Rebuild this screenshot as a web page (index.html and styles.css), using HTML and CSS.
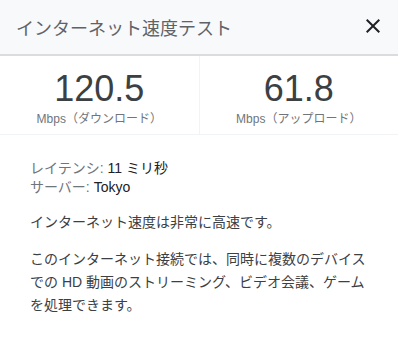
FILE: index.html
```html
<!DOCTYPE html>
<html lang="ja">
  <head>
    <meta charset="UTF-8" />
    <meta name="viewport" content="width=device-width, initial-scale=1.0" />
    <title>インターネット速度テスト</title>
    <link rel="stylesheet" href="styles.css">
  </head>
  <body class="body">
    <div class="panel">
      <div class="header">
        <p class="title">インターネット速度テスト</p>
        <button class="close" aria-label="閉じる">
          <svg width="24" height="24" viewBox="0 0 24 24">
            <path fill="#202124" d="M19 6.41L17.59 5 12 10.59 6.41 5 5 6.41 10.59 12 5 17.59 6.41 19 12 13.41 17.59 19 19 17.59 13.41 12z"/>
          </svg>
        </button>
      </div>
      <div class="stats">
        <div class="stat">
          <div class="value">120.5</div>
          <div class="unit">Mbps（ダウンロード）</div>
        </div>
        <div class="stat">
          <div class="value">61.8</div>
          <div class="unit">Mbps（アップロード）</div>
        </div>
      </div>
      <div class="details">
        <div class="meta">
          <div><span class="label">レイテンシ:</span> 11 ミリ秒</div>
          <div><span class="label">サーバー:</span> Tokyo</div>
        </div>
        <p class="text">インターネット速度は非常に高速です。</p>
        <p class="text">このインターネット接続では、同時に複数のデバイスでの HD 動画のストリーミング、ビデオ会議、ゲームを処理できます。</p>
      </div>
    </div>
  </body>
</html>
```
FILE: styles.css
```css
.body {
  margin: 0;
  background-color: #fff;
  font-family: Arial, "Liberation Sans", "Noto Sans CJK JP", sans-serif;
  color: #3c4043;
}
.panel {
  width: 398px;
}
.header {
  box-sizing: border-box;
  height: 56px;
  background-color: #f8f9fa;
  border-bottom: 2px solid #dadce0;
  display: flex;
  align-items: center;
  justify-content: space-between;
  padding-left: 16px;
  padding-right: 13px;
}
.title {
  margin: 0;
  font-size: 18px;
  color: #5f6368;
}
.close {
  border: none;
  background: none;
  padding: 0;
  width: 24px;
  height: 24px;
  margin-top: -2px;
  cursor: pointer;
}
.stats {
  display: flex;
  border-bottom: 1px solid #f1f3f4;
}
.stat {
  flex: 1;
  height: 78px;
  display: flex;
  flex-direction: column;
  align-items: center;
  padding-top: 13px;
  box-sizing: border-box;
}
.stat + .stat {
  border-left: 1px solid #f1f3f4;
}
.value {
  font-size: 36px;
  line-height: 40px;
  color: #3c4043;
}
.unit {
  margin-top: 2px;
  font-size: 12px;
  line-height: 16px;
  color: #70757a;
}
.details {
  padding: 24px 30px 0 30px;
  font-size: 14px;
}
.meta {
  line-height: 19px;
  color: #202124;
}
.label {
  color: #70757a;
}
.text {
  margin: 14px 0 0 0;
  line-height: 23px;
  color: #3c4043;
}
```
